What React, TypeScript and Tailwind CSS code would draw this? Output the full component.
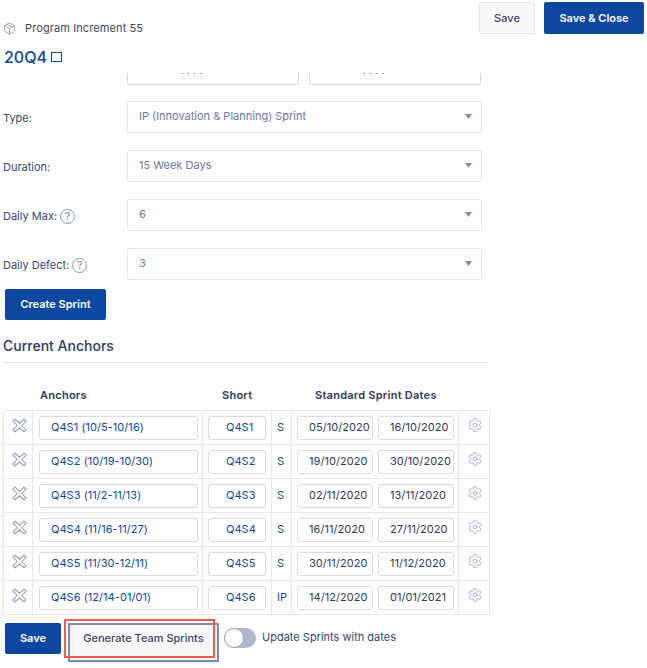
import { Package, Settings } from "lucide-react";

const rows = [
  { name: "Q4S1 (10/5-10/16)", short: "Q4S1", kind: "S", start: "05/10/2020", end: "16/10/2020" },
  { name: "Q4S2 (10/19-10/30)", short: "Q4S2", kind: "S", start: "19/10/2020", end: "30/10/2020" },
  { name: "Q4S3 (11/2-11/13)", short: "Q4S3", kind: "S", start: "02/11/2020", end: "13/11/2020" },
  { name: "Q4S4 (11/16-11/27)", short: "Q4S4", kind: "S", start: "16/11/2020", end: "27/11/2020" },
  { name: "Q4S5 (11/30-12/11)", short: "Q4S5", kind: "S", start: "30/11/2020", end: "11/12/2020" },
  { name: "Q4S6 (12/14-01/01)", short: "Q4S6", kind: "IP", start: "14/12/2020", end: "01/01/2021" },
];

const fields = [
  { label: "Type:", value: "IP (Innovation & Planning) Sprint", help: false },
  { label: "Duration:", value: "15 Week Days", help: false },
  { label: "Daily Max:", value: "6", help: true },
  { label: "Daily Defect:", value: "3", help: true },
];

const HelpIcon = () => (
  <span className="ml-[3px] flex h-[15px] w-[15px] items-center justify-center rounded-full border border-[#8a97b5] text-[10px] leading-none text-[#6d7ca0]">
    ?
  </span>
);

const RemoveIcon = () => (
  <svg width="15" height="15" viewBox="0 0 16 16" fill="none" stroke="#8f9bb8" strokeWidth="1.1" strokeLinejoin="round">
    <path d="M3.2 1.2 8 5.6l4.8-4.4 2.2 2.2L10.4 8l4.6 4.6-2.2 2.2L8 10.4l-4.8 4.4L1 12.6 5.6 8 1 3.4z" />
  </svg>
);

const Caret = () => (
  <svg width="7" height="5" viewBox="0 0 7 5" fill="#7f8cab">
    <path d="M0 0h7L3.5 5z" />
  </svg>
);

const SelectField = ({ label, value, help }: { label: string; value: string; help: boolean }) => (
  <div className="flex h-[32px] items-center">
    <div className="flex w-[127px] items-center pl-[3px] pt-[2px] text-[11px] text-[#3a4668]">
      {label}
      {help && <HelpIcon />}
    </div>
    <div className="flex h-[32px] w-[355px] items-center justify-between rounded-[2px] border border-[#e6e8ee] pb-[1px] pl-[11px] pr-[9px] text-[11px] text-[#6b789a]">
      <span>{value}</span>
      <Caret />
    </div>
  </div>
);

const ClippedInput = () => (
  <div className="h-[12px] w-[172px] overflow-hidden rounded-b-[2px] border border-t-0 border-[#d9dce4]">
    <div className="-mt-[13px] pl-[12px] text-[11px] leading-[16px] text-[#6b789a]">dd/mm/yyyy</div>
  </div>
);

const CellInput = ({ value, className }: { value: string; className: string }) => (
  <div className={`flex h-[24px] items-center rounded-[3px] border border-[#d9dce4] tracking-[0.05px] ${className}`}>{value}</div>
);

const App = () => {
  return (
    <div className="h-[668px] w-[647px] overflow-hidden bg-white font-['Inter',sans-serif] text-[#2d3a5c]">
      <div className="flex h-[73px] justify-between">
        <div className="pl-[3px] pt-[21px]">
          <div className="flex h-[15px] items-center text-[11px] tracking-[0.1px] text-[#3a4668]">
            <Package size={13} strokeWidth={1.5} className="text-[#8a96b3]" />
            <span className="ml-[9px]">Program Increment 55</span>
          </div>
          <div className="ml-[1px] mt-[9px] flex items-center text-[16px] font-medium leading-[24px] text-[#0d47a1]">
            20Q4
            <span className="ml-[4px] h-[10px] w-[11px] border-[1.5px] border-[#0d47a1]" />
          </div>
        </div>
        <div className="flex items-start gap-[9px] pr-[3px] pt-[2px]">
          <button className="h-[32px] w-[56px] rounded-[2px] border border-[#e6e8ee] bg-[#fafafb] text-[11px] font-medium text-[#3a4668]">
            Save
          </button>
          <button className="h-[32px] w-[100px] rounded-[2px] bg-[#0d47a1] text-[11px] font-semibold text-white">
            Save &amp; Close
          </button>
        </div>
      </div>

      <div className="flex gap-[10px] pl-[127px]">
        <ClippedInput />
        <ClippedInput />
      </div>

      <div className="mt-[16px] flex flex-col gap-[17px]">
        {fields.map((f) => (
          <SelectField key={f.label} label={f.label} value={f.value} help={f.help} />
        ))}
      </div>

      <button className="ml-[5px] mt-[9px] block h-[31px] w-[101px] rounded-[2px] bg-[#0d47a1] text-[11px] font-semibold text-white">
        Create Sprint
      </button>

      <div className="ml-[3px] mt-[16px] h-[27px] w-[486px] border-b border-[#e6e8ee] text-[14px] font-medium leading-[20px] text-[#2d3a5c]">
        Current Anchors
      </div>

      <div className="ml-[3px] mt-[21px] w-[487px]">
        <div className="flex h-[26px] text-[11px] font-semibold leading-[22px] tracking-[0.25px] text-[#2d3a5c]">
          <div className="w-[37px]" />
          <div className="w-[163px]">Anchors</div>
          <div className="w-[69px] pl-[19px]">Short</div>
          <div className="w-[218px] pl-[43px]">Standard Sprint Dates</div>
        </div>
        <div className="border-l border-t border-[#e6e8ee]">
          {rows.map((r) => (
            <div key={r.short} className="flex h-[34px] border-b border-[#e6e8ee] text-[11px]">
              <div className="flex w-[29px] items-center justify-center border-r border-[#e6e8ee] pb-[5px] pl-[2px]">
                <RemoveIcon />
              </div>
              <div className="flex w-[170px] items-center border-r border-[#e6e8ee] pl-[6px]">
                <CellInput value={r.name} className="w-[159px] pl-[11px] text-[#0d47a1]" />
              </div>
              <div className="flex w-[69px] items-center border-r border-[#e6e8ee] pl-[5px]">
                <CellInput value={r.short} className="w-[58px] pl-[17px] text-[#0d47a1]" />
              </div>
              <div className="flex w-[20px] items-center border-r border-[#e6e8ee] pl-[5px] text-[#0d47a1]">
                {r.kind}
              </div>
              <div className="flex w-[167px] items-center gap-[5px] border-r border-[#e6e8ee] pl-[5px] text-[#2d3a5c]">
                <CellInput value={r.start} className="w-[76px] pl-[11px]" />
                <CellInput value={r.end} className="w-[76px] pl-[11px]" />
              </div>
              <div className="flex w-[31px] items-center justify-center border-r border-[#e6e8ee] pb-[5px] pl-[1px]">
                <Settings size={16} strokeWidth={1.1} className="text-[#8f9bb8]" />
              </div>
            </div>
          ))}
        </div>
      </div>

      <div className="ml-[5px] mt-[8px] flex items-start">
        <button className="h-[31px] w-[56px] rounded-[2px] bg-[#0d47a1] text-[11px] font-semibold text-white">
          Save
        </button>
        <div className="relative ml-[7px]">
          <button className="block h-[39px] w-[151px] border-2 border-[#7f8ba8] bg-[#f8f8fa] pb-[8px] text-[11px] font-medium text-[#3a4668]">
            Generate Team Sprints
          </button>
          <div className="absolute -left-[4px] -top-[4px] h-[39px] w-[151px] border-2 border-[#ee5b4f]" />
        </div>
        <div className="ml-[5px] mt-[5px] h-[20px] w-[32px] rounded-full bg-[#b0b8cc]">
          <div className="h-[20px] w-[20px] rounded-full border border-[#9aa5c0] bg-white" />
        </div>
        <span className="ml-[6px] mt-[6px] text-[11px] leading-[16px] text-[#3a4668]">Update Sprints with dates</span>
      </div>
    </div>
  );
};

export default App;
